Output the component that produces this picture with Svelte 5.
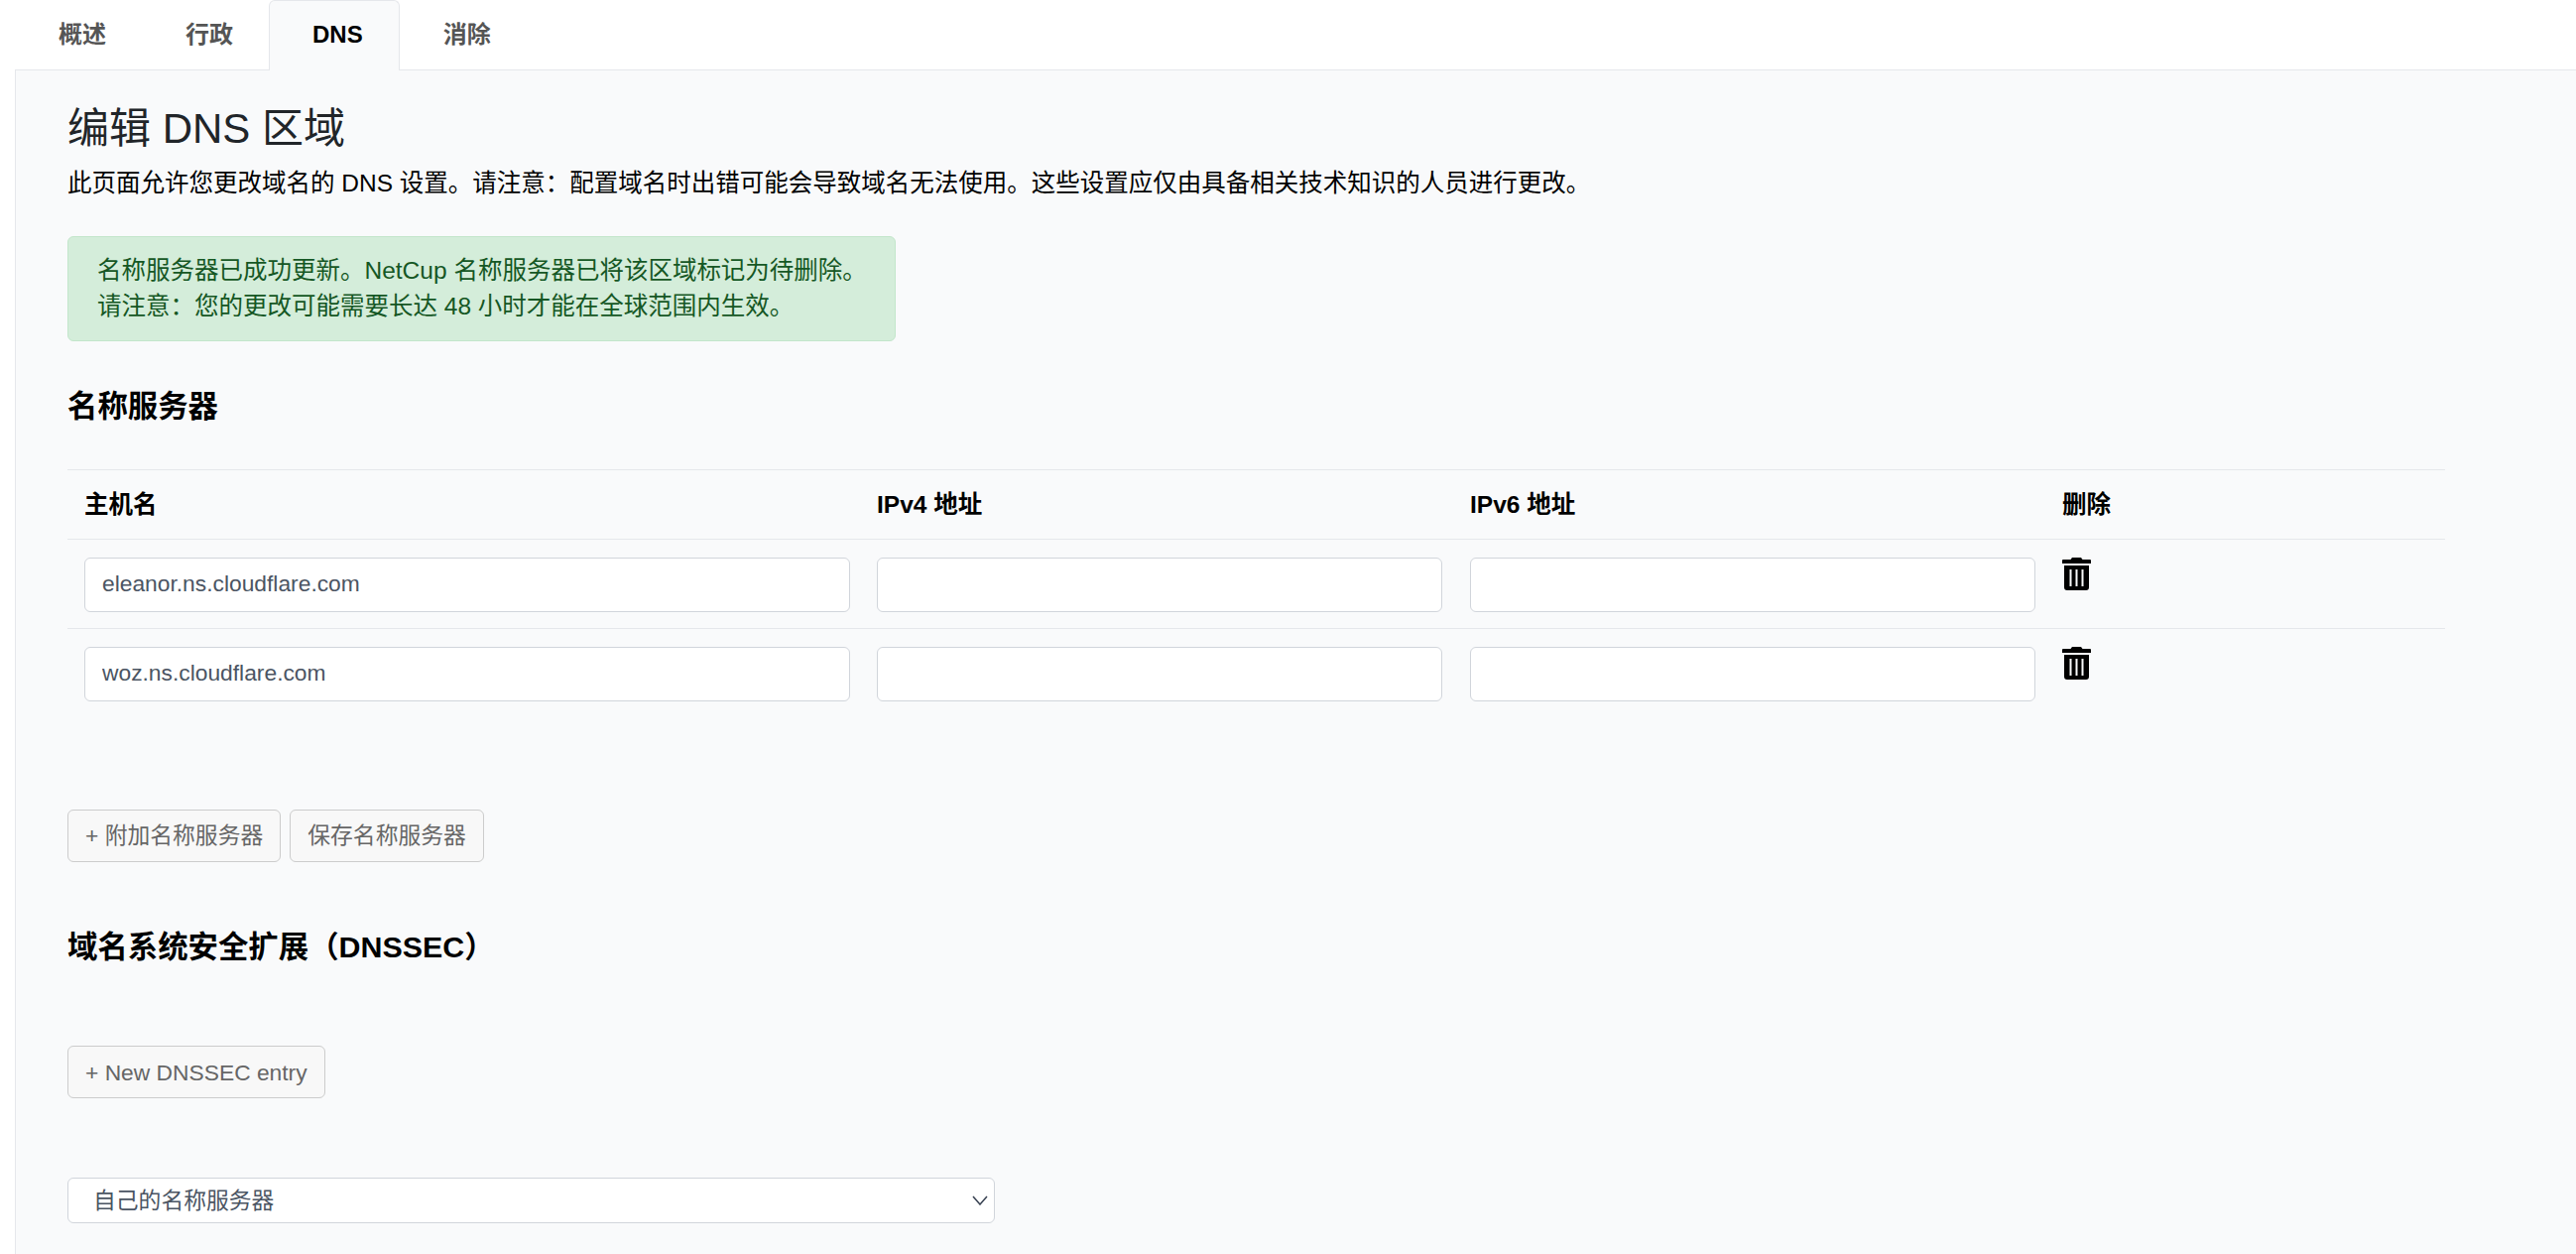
<script>
	const tabs = [
		{ label: '概述' },
		{ label: '行政' },
		{ label: 'DNS', active: true },
		{ label: '消除' }
	];
	const servers = [
		{ host: 'eleanor.ns.cloudflare.com', ipv4: '', ipv6: '' },
		{ host: 'woz.ns.cloudflare.com', ipv4: '', ipv6: '' }
	];
</script>

<nav class="tabs">
	{#each tabs as tab}
		<a href="#tab" class="tab" class:active={tab.active}>{tab.label}</a>
	{/each}
</nav>

<main class="content">
	<h1>编辑 DNS 区域</h1>
	<p class="intro">
		此页面允许您更改域名的 DNS 设置。请注意：配置域名时出错可能会导致域名无法使用。这些设置应仅由具备相关技术知识的人员进行更改。
	</p>

	<div class="alert">
		名称服务器已成功更新。NetCup 名称服务器已将该区域标记为待删除。<br />
		请注意：您的更改可能需要长达 48 小时才能在全球范围内生效。
	</div>

	<h3 class="ns-title">名称服务器</h3>

	<table>
		<colgroup>
			<col class="c1" />
			<col class="c2" />
			<col class="c3" />
			<col />
		</colgroup>
		<thead>
			<tr>
				<th>主机名</th>
				<th>IPv4 地址</th>
				<th>IPv6 地址</th>
				<th>删除</th>
			</tr>
		</thead>
		<tbody>
			{#each servers as server}
				<tr>
					<td><input type="text" value={server.host} /></td>
					<td><input type="text" value={server.ipv4} /></td>
					<td><input type="text" value={server.ipv6} /></td>
					<td>
						<svg class="trash" width="29" height="33" viewBox="0 0 29 33" fill="#000">
							<path d="M10 0h9l1.500 2H28a1 1 0 0 1 1 1V6H0V3a1 1 0 0 1 1-1h7.500z" />
							<path
								fill-rule="evenodd"
								d="M2 8h25v22a3 3 0 0 1-3 3H5a3 3 0 0 1-3-3zM7.500 12v17h2V12zM13.500 12v17h2V12zM19.500 12v17h2V12z"
							/>
						</svg>
					</td>
				</tr>
			{/each}
		</tbody>
	</table>

	<div class="actions">
		<button>+ 附加名称服务器</button>
		<button>保存名称服务器</button>
	</div>

	<h3 class="sec-title">域名系统安全扩展（DNSSEC）</h3>

	<button class="new-entry">+ New DNSSEC entry</button>

	<div class="select-wrap">
		<select class="ns-select">
			<option>自己的名称服务器</option>
		</select>
		<svg class="chevron" width="16" height="10" viewBox="0 0 16 10" fill="none" stroke="#374151" stroke-width="1.500">
			<path d="M1 1l7 8 7-8" />
		</svg>
	</div>
</main>

<style>
	:global(body) {
		background: #fff;
		color: #000;
		font-family: 'Liberation Sans', 'Noto Sans CJK SC', sans-serif;
		font-size: 24.5px;
		line-height: 36px;
		overflow: hidden;
	}

	.tabs {
		display: flex;
		height: 70px;
		margin-left: 15px;
		padding-left: 0;
		border-bottom: 1px solid #e5e7eb;
		box-sizing: content-box;
	}

	.tab {
		display: flex;
		align-items: center;
		height: 70px;
		padding: 0 35px 2px 43px;
		box-sizing: border-box;
		color: #555;
		font-size: 24px;
		font-weight: 600;
		text-decoration: none;
		border: 1px solid transparent;
		border-bottom: 0;
		border-radius: 6px 6px 0 0;
	}

	.tab.active {
		height: 71px;
		padding-right: 36px;
		padding-bottom: 3px;
		color: #000;
		background: #f9fafb;
		border-color: #e5e7eb;
		font-weight: 700;
		margin-bottom: -1px;
	}

	.content {
		margin-left: 15px;
		padding: 34px 132px 0 52px;
		min-height: 1200px;
		background: #f9fafb;
		border-left: 1px solid #e5e7eb;
	}

	h1 {
		margin: 0;
		font-size: 42px;
		font-weight: 400;
		line-height: 1.2;
		color: #212529;
	}

	.intro {
		margin: 12px 0 0;
	}

	.alert {
		width: 835px;
		box-sizing: border-box;
		margin-top: 35px;
		padding: 16px 20px 16px 29px;
		background: #d4edda;
		border: 1px solid #c3e6cb;
		border-radius: 6px;
		color: #155724;
		white-space: nowrap;
	}

	h3 {
		margin: 0;
		font-size: 30.400px;
		font-weight: 700;
		line-height: 1.2;
	}

	.ns-title {
		margin-top: 47px;
	}

	table {
		width: 100%;
		margin-top: 45px;
		border-collapse: collapse;
		table-layout: fixed;
	}

	.c1 {
		width: 800px;
	}

	.c2,
	.c3 {
		width: 598px;
	}

	th {
		height: 70px;
		padding: 2px 12px 0 16px;
		text-align: left;
		font-weight: 700;
		border-top: 1px solid #e5e7eb;
		border-bottom: 1px solid #e5e7eb;
		box-sizing: border-box;
	}

	td {
		padding: 18px 12px 16px 16px;
		vertical-align: top;
		border-bottom: 1px solid #e5e7eb;
		box-sizing: border-box;
	}

	tbody tr:last-child td {
		border-bottom: 0;
	}

	th:first-child,
	td:first-child {
		padding-left: 17px;
		padding-right: 11px;
	}

	th:last-child,
	td:last-child {
		padding-left: 15px;
	}

	input {
		display: block;
		width: 100%;
		height: 55px;
		box-sizing: border-box;
		padding: 0 17px 2px;
		background: #fff;
		border: 1px solid #d1d5db;
		border-radius: 6px;
		color: #4b5563;
		font: inherit;
		font-size: 22.800px;
	}

	.trash {
		display: block;
	}

	.actions {
		display: flex;
		gap: 9px;
		margin-top: 93px;
	}

	button {
		display: block;
		height: 53px;
		padding: 0 17px;
		background: #f8f8f8;
		border: 1px solid #ccc;
		border-radius: 6px;
		color: #666;
		font: inherit;
		font-size: 22.800px;
	}

	.sec-title {
		margin-top: 67px;
	}

	.new-entry {
		margin-top: 82px;
	}

	.select-wrap {
		position: relative;
		width: 935px;
		margin-top: 80px;
	}

	.ns-select {
		display: block;
		width: 100%;
		height: 46px;
		padding: 0 25px;
		appearance: none;
		background: #fff;
		border: 1px solid #d1d5db;
		border-radius: 6px;
		color: #4b5563;
		font: inherit;
		font-size: 22.800px;
	}

	.chevron {
		position: absolute;
		right: 7px;
		top: 18px;
		pointer-events: none;
	}
</style>
